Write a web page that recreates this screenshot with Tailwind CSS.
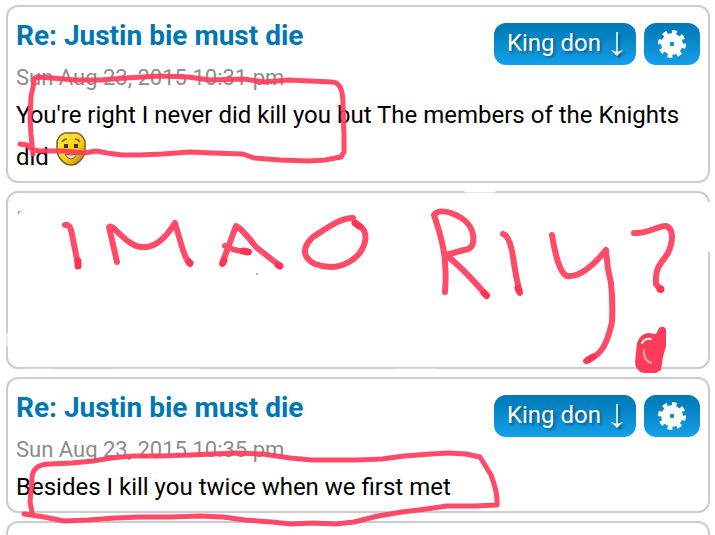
<!DOCTYPE html>
<html lang="en">
<head>
    <meta charset="UTF-8">
    <meta name="viewport" content="width=device-width, initial-scale=1.0">
    <title>Re: Justin bie must die</title>
    <script src="https://cdn.jsdelivr.net/npm/@tailwindcss/browser@4"></script>
</head>
<body class="bg-white text-black font-[Roboto,sans-serif]">

    <div class="relative h-screen overflow-hidden">
        <main class="flex flex-col gap-2 pt-[5px] pl-[6px] pr-[5px]">

            <article class="border-2 border-[#cccccc] rounded-xl px-2 pt-1 pb-[3px]">
                <header class="flex justify-between items-start">
                    <div>
                        <h2 class="text-[28px] leading-[50px] font-bold"><a href="#" class="text-[#0077b3]">Re: Justin bie must die</a></h2>
                        <p class="text-[22px] leading-[33px] text-[#8c8c8c]">Sun Aug 23, 2015 10:31 pm</p>
                    </div>
                    <div class="flex gap-2 pt-3">
                        <button type="button" class="h-[42px] px-[13px] pb-[2px] rounded-xl bg-linear-to-b from-[#0077b3] to-[#14a0ea] text-white text-2xl [text-shadow:2px_2px_3px_#00000060] flex items-center gap-[10px]">
                            King don
                            <svg class="w-3 h-7 drop-shadow-[2px_2px_1px_#00000060]" viewBox="0 0 12 28" fill="none" stroke="white" aria-hidden="true"><path d="M6 3V24" stroke-width="1.5"/><path d="M0 21 6 23 12 21 6 27Z" fill="white" stroke="none"/></svg>
                        </button>
                        <button type="button" aria-label="Settings" class="h-[42px] w-14 pb-px rounded-xl bg-linear-to-b from-[#0077b3] to-[#14a0ea] flex items-center justify-center">
                            <svg class="w-7 h-7" viewBox="0 0 28 28" fill="none" stroke="white" aria-hidden="true"><g transform="rotate(-2 14 14)"><circle cx="14" cy="14" r="6.5" stroke-width="8.5"/><circle cx="14" cy="14" r="12" stroke-width="4" stroke-dasharray="4.7 4.725"/></g></svg>
                        </button>
                    </div>
                </header>
                <p class="text-2xl leading-[42px]">You're right I never did kill you but The members of the Knights did
                    <svg class="inline-block w-8 h-9 -mt-5" viewBox="0 0 32 36" role="img" aria-label="Smiley"><defs><linearGradient id="face" x1="0" y1="0" x2="1" y2="1"><stop offset="0" stop-color="#fff03c"/><stop offset=".6" stop-color="#ffc817"/><stop offset="1" stop-color="#a87512"/></linearGradient></defs><path d="M10 2H22Q27 3 30 10V20C29 27 23 34 16 34S3 27 2 20V10Q5 3 10 2Z" fill="url(#face)" stroke="#776331" stroke-width="1.5"/><path d="M7 11Q9 8 12 8M20 8Q23 8 25 11" fill="none" stroke="#81661b" stroke-width="1.5"/><path d="M9 13H13V17H9ZM19 13H23V17H19Z" fill="#44371f"/><path d="M10 23Q16 25 22 23Q20 28 16 28T10 23" fill="#ddd" stroke="#86651b"/></svg>
                </p>
            </article>

            <article class="border-2 border-[#cccccc] rounded-xl min-h-[178px]"></article>

            <article class="border-2 border-[#cccccc] rounded-xl px-2 pt-1 pb-[3px]">
                <header class="flex justify-between items-start">
                    <div>
                        <h2 class="text-[28px] leading-[50px] font-bold"><a href="#" class="text-[#0077b3]">Re: Justin bie must die</a></h2>
                        <p class="text-[22px] leading-[33px] text-[#8c8c8c]">Sun Aug 23, 2015 10:35 pm</p>
                    </div>
                    <div class="flex gap-2 pt-3">
                        <button type="button" class="h-[42px] px-[13px] pb-[2px] rounded-xl bg-linear-to-b from-[#0077b3] to-[#14a0ea] text-white text-2xl [text-shadow:2px_2px_3px_#00000060] flex items-center gap-[10px]">
                            King don
                            <svg class="w-3 h-7 drop-shadow-[2px_2px_1px_#00000060]" viewBox="0 0 12 28" fill="none" stroke="white" aria-hidden="true"><path d="M6 3V24" stroke-width="1.5"/><path d="M0 21 6 23 12 21 6 27Z" fill="white" stroke="none"/></svg>
                        </button>
                        <button type="button" aria-label="Settings" class="h-[42px] w-14 pb-px rounded-xl bg-linear-to-b from-[#0077b3] to-[#14a0ea] flex items-center justify-center">
                            <svg class="w-7 h-7" viewBox="0 0 28 28" fill="none" stroke="white" aria-hidden="true"><g transform="rotate(-2 14 14)"><circle cx="14" cy="14" r="6.5" stroke-width="8.5"/><circle cx="14" cy="14" r="12" stroke-width="4" stroke-dasharray="4.7 4.725"/></g></svg>
                        </button>
                    </div>
                </header>
                <p class="text-2xl leading-[42px]">Besides I kill you twice when we first met</p>
            </article>

            <article class="border-2 border-[#cccccc] rounded-xl min-h-[136px]"></article>
        </main>

        <!-- freehand marker strokes -->
        <svg class="absolute top-0 left-0 w-[715px] h-[535px] pointer-events-none" viewBox="0 0 715 535" fill="none" stroke-linecap="round" stroke-linejoin="round" aria-hidden="true">
            <!-- eraser smudges on the middle card -->
            <g stroke="white" stroke-width="3">
                <path d="M466 191H494M709 203V250"/>
                <path d="M7 334V345M29 370H52M118 370H200M396 370H438" stroke-opacity=".6"/>
            </g>
            <path d="M18 211H21L18 215Z" fill="#79b5d8"/>
            <circle cx="257" cy="274" r="1" fill="#999"/>
            <g stroke="#ff3c5c" stroke-opacity=".93" stroke-width="6">
                <path d="M20 144 27 145 33 150 40 151 64 151 84 153 96 151 107 153 122 155 139 155 163 154 190 152 213 153 243 154 254 158 280 160 309 161 325 160 341 157 344 152 344 135 343 104 Q343 82 332 82L310 81 288 80 265 82 243 79 210 80 188 77 160 76 126 78 101 80 75 80 52 78 37 77 Q33 78 34 83L31 96 30 119 31 134 33 154" stroke-width="5"/>
                <path d="M24 514 31 515 44 517 64 521 88 520 115 518 140 517 170 517 200 516 223 517 245 520 272 522 291 524 313 523 336 524 354 522 378 516 402 512 426 509 447 506 475 506 497 505 Q498 493 491 475L480 457 466 454 449 453 431 454 404 456 382 459 357 460 334 460 312 460 290 458 263 454 236 453 213 454 190 455 160 456 133 456 111 458 93 461 72 463 50 464 Q31 464 32 481L30 502 32 512" stroke-width="5"/>
                <!-- scribbled note -->
                <path d="M65 225Q70 223 72 234T78 264"/>
                <path d="M117 262 109 227C113 223 127 247 142 247C160 249 173 226 175 223L182 247Q186 260 190 264"/>
                <path d="M222 264 236 226Q242 229 256 247L280 266M225 246Q234 251 249 252"/>
                <path d="M353 218C340 218 327 228 313 237C301 248 303 258 315 264C331 270 347 267 359 254C367 243 368 232 360 226L355 223"/>
                <path d="M445 292C448 254 440 234 434 215Q438 209 451 213C468 219 475 230 473 243Q472 249 464 250L446 255Q463 268 487 296"/>
                <path d="M503 234Q510 236 513 257T520 293"/>
                <path d="M552 235Q559 279 570 276C583 276 597 261 606 250Q607 268 611 283Q613 302 612 322C609 335 605 350 595 356L586 361"/>
                <path d="M634 233C648 234 657 226 666 226C673 228 674 240 668 253C660 265 655 267 656 284L661 290"/>
            </g>
            <!-- heavier blobs where strokes end -->
            <g stroke="#ff3557" stroke-width="7">
                <path d="M78 261V266M189 262 190 263M278 265 280 266M243 251 248 252M484 293 486 295M518 288 519 291M588 360 593 357M660 289 661 289M355 223 359 226M223 263 224 260"/>
            </g>
            <!-- the filled-in dot, with two slivers left open -->
            <path d="M659 328Q663 325 666 329L666 346 663 357 661 370 656 373 644 373Q635 371 635 362L637 343Q640 334 648 333L656 334Z" fill="#ff3b5b"/>
            <path d="M642 343Q645 338 651 339" stroke="#fff0f2" stroke-width="2"/>
            <path d="M644 350Q643 360 651 363" stroke="#ffa5b4" stroke-width="2"/>
        </svg>
    </div>

</body>
</html>
